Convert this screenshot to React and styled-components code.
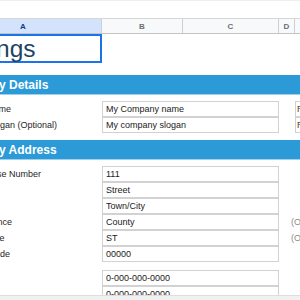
import React from "react";
import styled, { createGlobalStyle } from "styled-components";

const GlobalStyle = createGlobalStyle`
  html, body { margin: 0; padding: 0; background: #fff; }
  body { font-family: "Liberation Sans", Arial, sans-serif; }
`;

const COLS = "157px 81px 96px 16px 120px";

const Frame = styled.div`
  width: 300px;
  height: 300px;
  overflow: hidden;
  display: flex;
  flex-direction: column;
  background: #fff;
`;

const TopStrip = styled.div`
  height: 18px;
  flex: none;
  border-top: 1px solid #efefef;
  box-sizing: border-box;
`;

const Canvas = styled.div`
  flex: 1;
  overflow: hidden;
`;

const Sheet = styled.div`
  margin-left: -55px;
  width: max-content;
`;

const HeaderRow = styled.div`
  display: grid;
  grid-template-columns: ${COLS};
  height: 16px;
  box-sizing: border-box;
  border-top: 1px solid #d6d6d6;
  border-bottom: 1px solid #c4c4c4;
  background: #f8f9fa;
`;

const HeaderCell = styled.div`
  display: flex;
  align-items: center;
  justify-content: center;
  font-size: 8px;
  font-weight: bold;
  color: ${(p) => (p.$active ? "#0b3d8c" : "#6b6f74")};
  background: ${(p) => (p.$active ? "#d3e3fd" : "transparent")};
  border-right: 1px solid #cfcfcf;
`;

const Row = styled.div`
  display: grid;
  grid-template-columns: ${COLS};
  height: ${(p) => p.$h}px;
`;

const TitleCell = styled.div`
  box-shadow: inset 0 0 0 2px #1a73e8;
  display: flex;
  align-items: center;
  padding-left: 2px;
  font-size: 24.5px;
  color: #1d4563;
  white-space: nowrap;
  overflow: hidden;
`;

const SectionBar = styled.div`
  height: 20px;
  box-sizing: border-box;
  background: #2d9ad8;
  border-bottom: 1px solid #9fd0ee;
  color: #fff;
  font-weight: bold;
  font-size: 12px;
  display: flex;
  align-items: center;
  padding-left: 6px;
  white-space: nowrap;
`;

const Label = styled.div`
  font-size: 9px;
  color: #262626;
  display: flex;
  align-items: center;
  padding-left: 1px;
  white-space: nowrap;
  overflow: hidden;
`;

const Field = styled.div`
  grid-column: 2 / span 2;
  border: 1px solid #d2d2d2;
  font-size: 9px;
  color: #222;
  display: flex;
  align-items: center;
  padding-left: 3px;
  white-space: nowrap;
`;

const Note = styled.div`
  font-size: 9px;
  color: #8a8a8a;
  display: flex;
  align-items: center;
  padding-left: 12px;
  white-space: nowrap;
`;

const SideBox = styled.div`
  grid-column: 5;
  border: 1px solid #d2d2d2;
  font-size: 9px;
  color: #5e3d1f;
  display: flex;
  align-items: center;
  padding-left: 1px;
  white-space: nowrap;
`;

const Scrollbar = styled.div`
  height: 4px;
  flex: none;
  background: #f1f1f1;
  border-top: 1px solid #dedede;
`;

const companyFields = [
  { label: "Company Name", value: "My Company name", side: "Required" },
  { label: "Company Slogan (Optional)", value: "My company slogan", side: "Required" },
];

const addressFields = [
  { label: "Building/House Number", value: "111" },
  { label: "", value: "Street" },
  { label: "", value: "Town/City" },
  { label: "County/Province", value: "County", note: "(Optional)" },
  { label: "Province/State", value: "ST", note: "(Optional)" },
  { label: "Zip/Postal Code", value: "00000" },
];

const phoneFields = [
  { label: "Phone", value: "0-000-000-0000" },
  { label: "Fax", value: "0-000-000-0000" },
];

function FieldRow({ f }) {
  return (
    <Row $h={16}>
      <Label>{f.label}</Label>
      <Field>{f.value}</Field>
      {f.note ? <Note>{f.note}</Note> : <div />}
      {f.side ? <SideBox>{f.side}</SideBox> : null}
    </Row>
  );
}

export default function App() {
  return (
    <Frame>
      <GlobalStyle />
      <TopStrip />
      <Canvas>
        <Sheet>
          <HeaderRow>
            <HeaderCell $active>A</HeaderCell>
            <HeaderCell>B</HeaderCell>
            <HeaderCell>C</HeaderCell>
            <HeaderCell>D</HeaderCell>
            <HeaderCell>E</HeaderCell>
          </HeaderRow>
          <Row $h={29}>
            <TitleCell>Settings</TitleCell>
          </Row>
          <Row $h={12} />
          <SectionBar>Company Details</SectionBar>
          <Row $h={6} />
          {companyFields.map((f, i) => (
            <FieldRow key={i} f={f} />
          ))}
          <Row $h={7} />
          <SectionBar>Company Address</SectionBar>
          <Row $h={6} />
          {addressFields.map((f, i) => (
            <FieldRow key={i} f={f} />
          ))}
          <Row $h={8} />
          {phoneFields.map((f, i) => (
            <FieldRow key={i} f={f} />
          ))}
        </Sheet>
      </Canvas>
      <Scrollbar />
    </Frame>
  );
}
